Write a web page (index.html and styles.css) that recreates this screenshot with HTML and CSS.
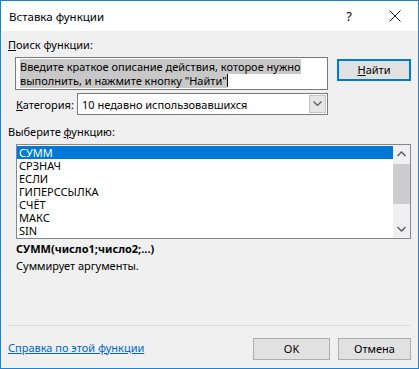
FILE: index.html
```html
<!DOCTYPE html>
<html>
<head>
<meta charset="utf-8">
<link rel="stylesheet" href="styles.css">
</head>
<body>
<div class="dialog">
	<div class="titlebar">
		<span class="title">Вставка функции</span>
		<span class="help">?</span>
		<span class="close">
			<svg width="12" height="12" viewBox="0 0 12 12"><path d="M0.5 0.5 L11.5 11.5 M11.5 0.5 L0.5 11.5" stroke="#222" stroke-width="1" fill="none"/></svg>
		</span>
	</div>

	<div class="content">
		<div class="label"><u>П</u>оиск функции:</div>
		<div class="search-row">
			<div class="search-box">
				<span class="hl">Введите краткое описание действия, которое нужно</span><br>
				<span class="hl">выполнить, и нажмите кнопку "Найти"</span><span class="caret"></span>
			</div>
			<div class="btn find"><u>Н</u>айти</div>
		</div>

		<div class="cat-row">
			<span class="cat-label"><u>К</u>атегория:</span>
			<div class="select">
				<span class="select-text">10 недавно использовавшихся</span>
				<span class="select-arrow">
					<svg width="9" height="6" viewBox="0 0 9 6"><path d="M0.5 0.5 L4.5 4.5 L8.5 0.5" stroke="#555" stroke-width="1.2" fill="none"/></svg>
				</span>
			</div>
		</div>

		<div class="label list-label">Выберите <u>ф</u>ункцию:</div>
		<div class="list">
			<div class="items">
				<div class="item selected">СУММ</div>
				<div class="item">СРЗНАЧ</div>
				<div class="item">ЕСЛИ</div>
				<div class="item">ГИПЕРССЫЛКА</div>
				<div class="item">СЧЁТ</div>
				<div class="item">МАКС</div>
				<div class="item">SIN</div>
			</div>
			<div class="scrollbar">
				<svg class="sb-arrow" width="9" height="6" viewBox="0 0 9 6"><path d="M0.5 5 L4.5 1 L8.5 5" stroke="#606060" stroke-width="1.5" fill="none"/></svg>
				<div class="sb-track"><div class="sb-thumb"></div></div>
				<svg class="sb-arrow" width="9" height="6" viewBox="0 0 9 6"><path d="M0.5 1 L4.5 5 L8.5 1" stroke="#606060" stroke-width="1.5" fill="none"/></svg>
			</div>
		</div>

		<div class="sig">СУММ(число1;число2;...)</div>
		<div class="desc">Суммирует аргументы.</div>
	</div>

	<div class="sep"></div>

	<div class="footer">
		<a class="help-link" href="#">Справка по этой функции</a>
		<div class="btn ok">OK</div>
		<div class="btn cancel">Отмена</div>
	</div>
</div>
</body>
</html>
```

FILE: styles.css
```css
body {
	margin: 0;
	font-family: "Noto Sans", sans-serif;
	font-size: 11px;
	color: #000;
}

.dialog {
	width: 419px;
	height: 369px;
	box-sizing: border-box;
	border: 1px solid #1883d7;
	background: #f0f0f0;
	display: flex;
	flex-direction: column;
}

.titlebar {
	height: 30px;
	background: #fff;
	display: flex;
	align-items: center;
	padding-left: 8px;
	font-size: 11.5px;
}

.title {
	flex: 1;
}

.help {
	width: 46px;
	text-align: center;
	font-size: 13px;
}

.close {
	width: 46px;
	display: flex;
	justify-content: center;
}

.content {
	padding: 6px 7px 0 7px;
	flex: 1;
}

.label {
	height: 16px;
	line-height: 16px;
}

.search-row {
	display: flex;
	margin-top: 4px;
}

.search-box {
	width: 313px;
	height: 33px;
	box-sizing: border-box;
	border: 1px solid #7a7a7a;
	background: #fff;
	margin-left: 7px;
	padding: 2px 4px;
	line-height: 14px;
	white-space: nowrap;
	overflow: hidden;
}

.hl {
	background: #c8c8c8;
}

.caret {
	display: inline-block;
	width: 1px;
	height: 13px;
	background: #000;
	vertical-align: -2px;
}

.btn {
	box-sizing: border-box;
	height: 22px;
	border: 1px solid #adadad;
	background: #e1e1e1;
	text-align: center;
	line-height: 20px;
}

.find {
	width: 74px;
	margin-left: 9px;
	margin-top: 2px;
	border: 2px solid #0078d7;
	line-height: 18px;
}

.cat-row {
	display: flex;
	align-items: center;
	margin-top: 3px;
	padding-left: 8px;
}

.cat-label {
	width: 61px;
}

.select {
	width: 251px;
	height: 22px;
	box-sizing: border-box;
	border: 1px solid #7a7a7a;
	background: #fff;
	display: flex;
	align-items: center;
}

.select-text {
	flex: 1;
	padding-left: 4px;
}

.select-arrow {
	width: 17px;
	height: 18px;
	margin-right: 1px;
	background: #e6e6e6;
	border: 1px solid #c4c4c4;
	box-sizing: border-box;
	display: flex;
	align-items: center;
	justify-content: center;
}

.list-label {
	margin-top: 9px;
}

.list {
	margin: 4px 0 0 8px;
	width: 395px;
	height: 95px;
	box-sizing: border-box;
	border: 1px solid #828790;
	background: #fff;
	display: flex;
}

.items {
	flex: 1;
	padding-top: 1px;
}

.item {
	height: 13px;
	line-height: 13px;
	padding-left: 2px;
}

.item.selected {
	background: #0078d7;
	color: #fff;
}

.scrollbar {
	width: 17px;
	background: #f0f0f0;
	display: flex;
	flex-direction: column;
	align-items: center;
}

.sb-arrow {
	margin: 6px 0;
}

.sb-track {
	flex: 1;
	width: 100%;
	padding-top: 1px;
}

.sb-thumb {
	height: 40px;
	background: #cdcdcd;
}

.sig {
	margin: 2px 0 0 8px;
	font-weight: bold;
	line-height: 16px;
}

.desc {
	margin: 1px 0 0 8px;
	line-height: 16px;
}

.sep {
	height: 1px;
	background: #dcdcdc;
	margin: 0 7px 0 7px;
}

.footer {
	height: 42px;
	display: flex;
	align-items: center;
	padding: 0 7px;
}

.help-link {
	flex: 1;
	color: #0066cc;
	text-decoration: underline;
}

.ok, .cancel {
	width: 77px;
	margin-top: 3px;
}

.cancel {
	margin-left: 8px;
	width: 73px;
}
```
